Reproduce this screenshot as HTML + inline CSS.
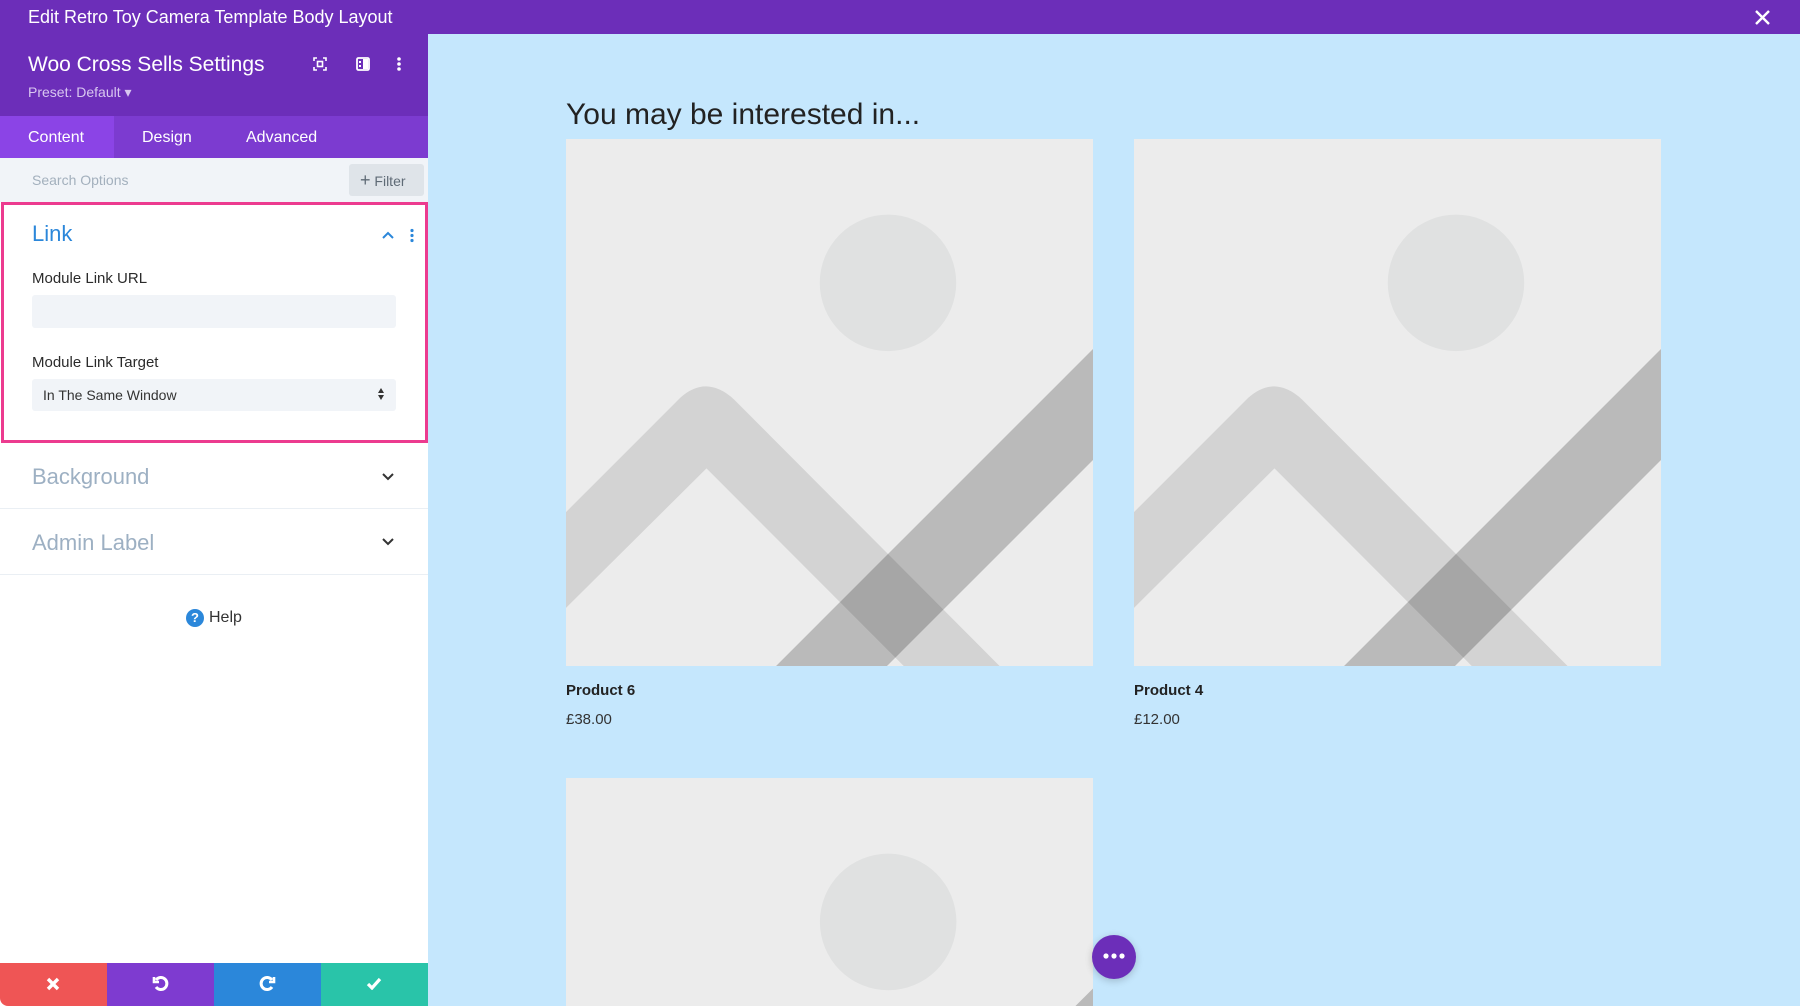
<!DOCTYPE html>
<html style="width:1800px;height:1006px;overflow:hidden"><head><meta charset="utf-8"><style>
*{margin:0;padding:0;box-sizing:border-box}
body{width:1800px;height:1006px;overflow:hidden;background:#c5e7fd;font-family:"Liberation Sans",sans-serif;position:relative}
.abs{position:absolute}
#title{left:0;top:0;width:1800px;height:34px;background:#6c2eb9;color:#fff;font-size:18px;line-height:34px;padding-left:28px}
#side{left:0;top:34px;width:428px;height:972px;background:#fff}
#hdr{left:0;top:34px;width:428px;height:82px;background:#6c2eb9}
#tabs{left:0;top:116px;width:428px;height:42px;background:#7c3bd0;color:#fff;font-size:16px}
#tabs span{position:absolute;top:1px;line-height:42px}
#search{left:0;top:158px;width:428px;height:44px;background:#f1f4f8}
.lbl{font-size:15px;color:#2b2b2b}
.inp{background:#f1f4f8;border-radius:3px}
.btn{top:963px;height:43px;width:107px}
.pt{font-size:15px;font-weight:bold;color:#222}
.pp{font-size:15px;color:#333}
</style></head><body>
<div class="abs" id="title">Edit Retro Toy Camera Template Body Layout</div>
<svg class="abs" style="left:1754px;top:9px" width="17" height="17" viewBox="0 0 17 17"><path d="M2 2L15 15M15 2L2 15" stroke="#fff" stroke-width="2.4"/></svg>
<div class="abs" id="side"></div>
<div class="abs" id="hdr">
 <div class="abs" style="left:28px;top:19px;color:#fff;font-size:21px">Woo Cross Sells Settings</div>
 <div class="abs" style="left:28px;top:50px;color:#d8c6f0;font-size:14px">Preset: Default ▾</div>
 <svg class="abs" style="left:313px;top:23px" width="14" height="14" viewBox="0 0 14 14" fill="none" stroke="#fff" stroke-width="1.6"><path d="M1 4V1H4M10 1H13V4M13 10V13H10M4 13H1V10"/><rect x="4.5" y="4.5" width="5" height="5"/></svg>
 <svg class="abs" style="left:356px;top:23px" width="14" height="14" viewBox="0 0 14 14"><rect x="1" y="1" width="12" height="12" rx="1.5" fill="none" stroke="#fff" stroke-width="1.8"/><rect x="7" y="2" width="5" height="10" fill="#fff"/><rect x="3" y="4" width="2" height="2" fill="#fff"/><rect x="3" y="8" width="2" height="2" fill="#fff"/></svg>
 <svg class="abs" style="left:396px;top:22px" width="6" height="16" viewBox="0 0 6 16" fill="#fff"><circle cx="3" cy="3" r="1.8"/><circle cx="3" cy="8" r="1.8"/><circle cx="3" cy="13" r="1.8"/></svg>
</div>
<div class="abs" id="tabs">
 <div class="abs" style="left:0;top:0;width:114px;height:42px;background:#8b44e6"></div>
 <span style="left:28px">Content</span><span style="left:142px">Design</span><span style="left:246px">Advanced</span>
</div>
<div class="abs" id="search">
 <div class="abs" style="left:32px;top:14px;color:#a3b0bd;font-size:14px">Search Options</div>
 <div class="abs" style="left:349px;top:6px;width:75px;height:32px;background:#dfe4e9;border-radius:3px;color:#5f6b76;font-size:14px;line-height:32px;padding-left:11px"><b style="font-size:18px;font-weight:normal">+</b> Filter</div>
</div>
<div class="abs" style="left:1px;top:202px;width:427px;height:241px;border:3px solid #ec3b8f"></div>
<div class="abs" style="left:32px;top:221px;color:#2b87da;font-size:22px">Link</div>
<svg class="abs" style="left:381px;top:230px" width="14" height="10" viewBox="0 0 14 10"><path d="M2 8L7 3L12 8" fill="none" stroke="#2b87da" stroke-width="2"/></svg>
<svg class="abs" style="left:409px;top:228px" width="6" height="15" viewBox="0 0 6 15" fill="#2b87da"><circle cx="3" cy="2.5" r="1.6"/><circle cx="3" cy="7.5" r="1.6"/><circle cx="3" cy="12.5" r="1.6"/></svg>
<div class="abs lbl" style="left:32px;top:270px">Module Link URL</div>
<div class="abs inp" style="left:32px;top:295px;width:364px;height:33px"></div>
<div class="abs lbl" style="left:32px;top:354px">Module Link Target</div>
<div class="abs inp" style="left:32px;top:379px;width:364px;height:32px;font-size:14px;color:#333;line-height:32px;padding-left:11px">In The Same Window</div>
<svg class="abs" style="left:377px;top:387px" width="8" height="14" viewBox="0 0 8 14" fill="#333"><path d="M4 1L7 6H1Z M4 13L7 8H1Z"/></svg>
<div class="abs" style="left:32px;top:464px;color:#9db0c3;font-size:22px">Background</div>
<svg class="abs" style="left:381px;top:472px" width="14" height="10" viewBox="0 0 14 10"><path d="M2 2L7 7L12 2" fill="none" stroke="#333" stroke-width="2"/></svg>
<div class="abs" style="left:0;top:508px;width:428px;border-top:1px solid #eaeff4"></div>
<div class="abs" style="left:32px;top:530px;color:#9db0c3;font-size:22px">Admin Label</div>
<svg class="abs" style="left:381px;top:537px" width="14" height="10" viewBox="0 0 14 10"><path d="M2 2L7 7L12 2" fill="none" stroke="#333" stroke-width="2"/></svg>
<div class="abs" style="left:0;top:574px;width:428px;border-top:1px solid #eaeff4"></div>
<div class="abs" style="left:186px;top:609px;width:18px;height:18px;border-radius:50%;background:#2b87da;color:#fff;font-size:13px;font-weight:bold;text-align:center;line-height:18px">?</div>
<div class="abs" style="left:209px;top:609px;color:#333;font-size:16px">Help</div>
<div class="abs btn" style="left:0;background:#ef5555;border-bottom-left-radius:8px"></div>
<div class="abs btn" style="left:107px;background:#7e3bd0"></div>
<div class="abs btn" style="left:214px;background:#2b87da"></div>
<div class="abs btn" style="left:321px;width:107px;background:#29c4a9"></div>
<svg class="abs" style="left:46px;top:977px" width="14" height="14" viewBox="0 0 14 14"><path d="M2 2L12 12M12 2L2 12" stroke="#fff" stroke-width="3.4"/></svg>
<svg class="abs" style="left:152px;top:975px" width="17" height="17" viewBox="0 0 17 17" fill="none" stroke="#fff" stroke-width="3"><path d="M4 5A6 6 0 1 1 4 12"/><path d="M2 2V7H7" stroke-width="2.6"/></svg>
<svg class="abs" style="left:259px;top:975px" width="17" height="17" viewBox="0 0 17 17" fill="none" stroke="#fff" stroke-width="3"><path d="M13 5A6 6 0 1 0 13 12"/><path d="M15 2V7H10" stroke-width="2.6"/></svg>
<svg class="abs" style="left:366px;top:977px" width="16" height="13" viewBox="0 0 16 13"><path d="M2 7L6 11L14 2" fill="none" stroke="#fff" stroke-width="3.2"/></svg>

<div class="abs" style="left:566px;top:98px;font-size:30px;color:#222">You may be interested in...</div>

<svg width="0" height="0" style="position:absolute;left:0;top:0"><defs><g id="ph"><rect width="1568" height="1568" fill="#ececec"/><circle cx="958" cy="428" r="203" fill="#e0e1e1"/><path d="M0 1110L340 770Q418 700 500 775L1290 1568H1005L418 980L0 1395Z" fill="#d3d3d3"/><path d="M625 1568L1568 625V955L955 1568Z" fill="#000" fill-opacity="0.21"/></g></defs></svg>
<svg class="abs" style="left:566px;top:139px" width="527" height="527" viewBox="0 0 1568 1568"><use href="#ph"/></svg>
<svg class="abs" style="left:1134px;top:139px" width="527" height="527" viewBox="0 0 1568 1568"><use href="#ph"/></svg>
<svg class="abs" style="left:566px;top:778px" width="527" height="228" viewBox="0 0 1568 678" preserveAspectRatio="xMinYMin slice"><use href="#ph"/></svg>
<div class="abs pt" style="left:566px;top:682px">Product 6</div>
<div class="abs pp" style="left:566px;top:711px">£38.00</div>
<div class="abs pt" style="left:1134px;top:682px">Product 4</div>
<div class="abs pp" style="left:1134px;top:711px">£12.00</div>
<div class="abs" style="left:1092px;top:935px;width:44px;height:44px;border-radius:50%;background:#6c2eb9;box-shadow:0 2px 8px rgba(0,0,0,.2)"></div>
<svg class="abs" style="left:1100px;top:951px" width="28" height="10" viewBox="0 0 28 10" fill="#fff"><circle cx="6" cy="5" r="2.6"/><circle cx="14" cy="5" r="2.6"/><circle cx="22" cy="5" r="2.6"/></svg>
</body></html>
